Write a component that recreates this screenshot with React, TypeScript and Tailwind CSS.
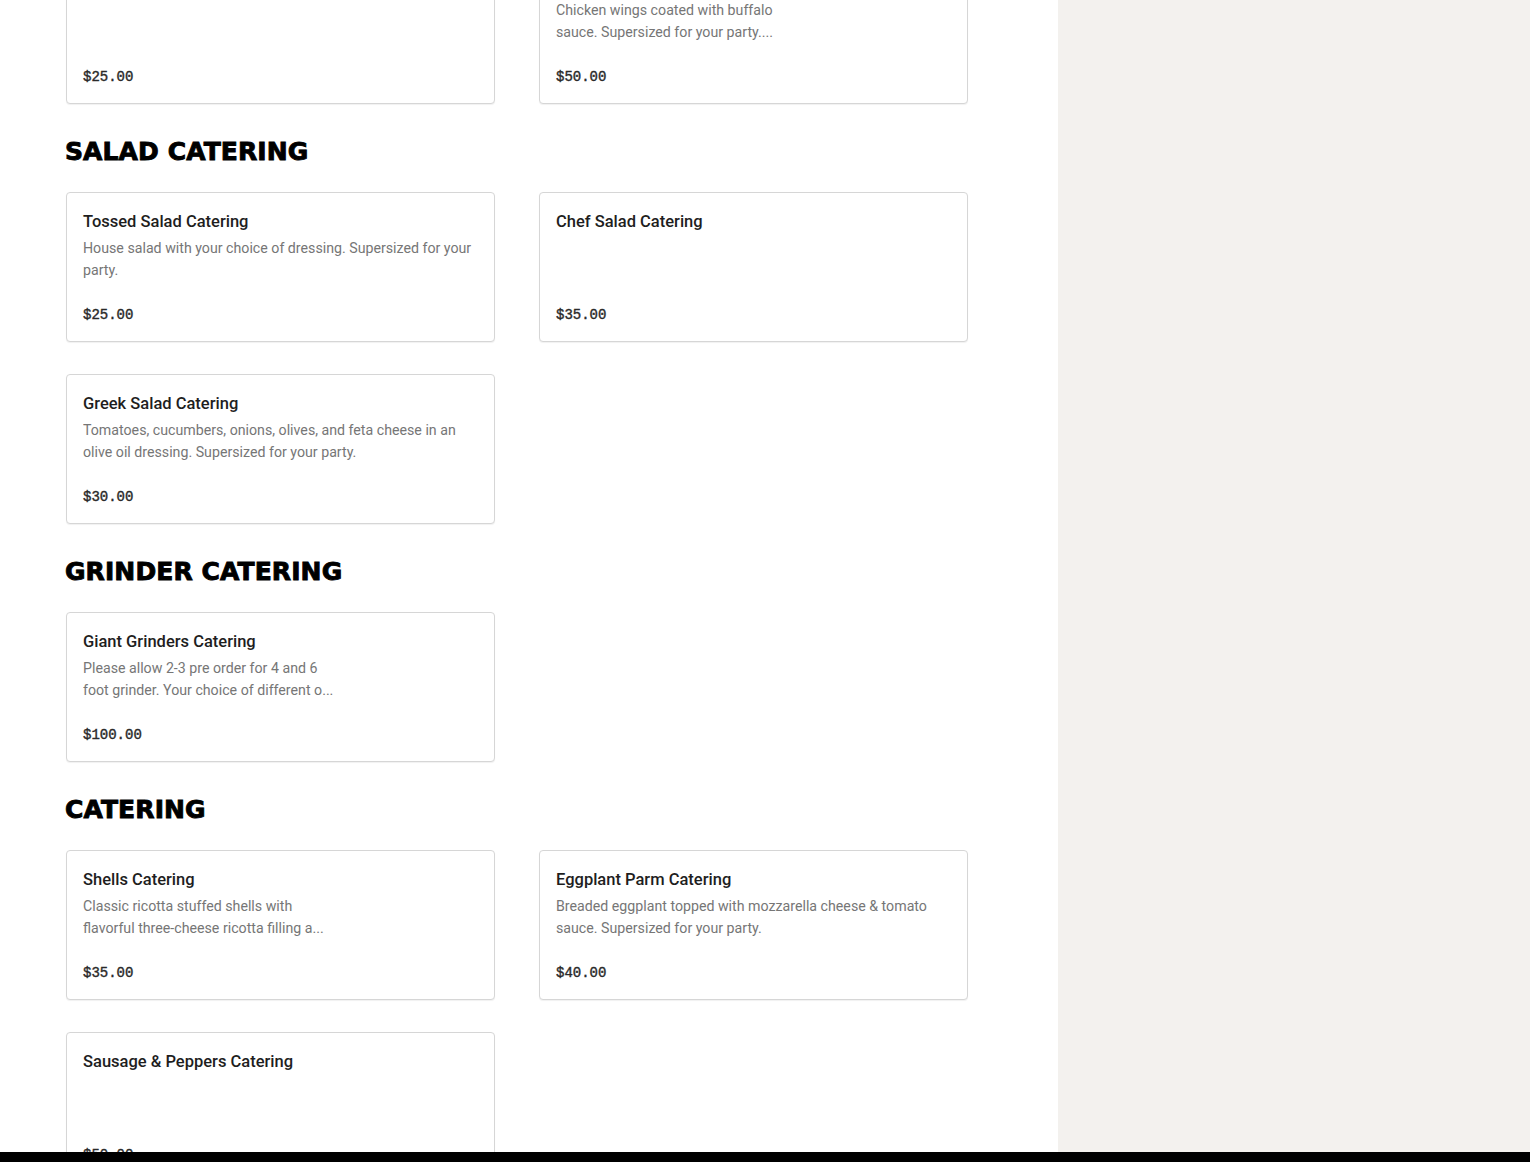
import React from "react";

type Item = { title: string; desc?: string; price: string; narrow?: boolean };
type Section = { heading?: string; items: Item[] };

const sections: Section[] = [
  {
    items: [
      { title: "Garlic Bread Catering", price: "$25.00" },
      {
        title: "Buffalo Wings Catering",
        desc: "Chicken wings coated with buffalo sauce. Supersized for your party....",
        price: "$50.00",
        narrow: true,
      },
    ],
  },
  {
    heading: "SALAD CATERING",
    items: [
      {
        title: "Tossed Salad Catering",
        desc: "House salad with your choice of dressing. Supersized for your party.",
        price: "$25.00",
      },
      { title: "Chef Salad Catering", price: "$35.00" },
      {
        title: "Greek Salad Catering",
        desc: "Tomatoes, cucumbers, onions, olives, and feta cheese in an olive oil dressing. Supersized for your party.",
        price: "$30.00",
      },
    ],
  },
  {
    heading: "GRINDER CATERING",
    items: [
      {
        title: "Giant Grinders Catering",
        desc: "Please allow 2-3 pre order for 4 and 6 foot grinder. Your choice of different o...",
        price: "$100.00",
        narrow: true,
      },
    ],
  },
  {
    heading: "CATERING",
    items: [
      {
        title: "Shells Catering",
        desc: "Classic ricotta stuffed shells with flavorful three-cheese ricotta filling a...",
        price: "$35.00",
        narrow: true,
      },
      {
        title: "Eggplant Parm Catering",
        desc: "Breaded eggplant topped with mozzarella cheese & tomato sauce. Supersized for your party.",
        price: "$40.00",
      },
      { title: "Sausage & Peppers Catering", price: "$50.00" },
    ],
  },
];

function Card({ item }: { item: Item }) {
  return (
    <div className="flex h-[150px] flex-col rounded-[4px] border border-[#d6d6d6] bg-white p-4 shadow-[0_1px_1px_rgba(0,0,0,0.06)]">
      <div className="pt-px text-[16.5px] leading-6 font-medium text-[#1e1e1e] [font-family:Roboto,'Liberation_Sans',sans-serif]">
        {item.title}
      </div>
      {item.desc && (
        <div
          className={
            "mt-[3px] line-clamp-2 text-[14.2px] leading-[22px] text-[#767676] [font-family:Roboto,'Liberation_Sans',sans-serif] " +
            (item.narrow ? "max-w-[258px]" : "")
          }
        >
          {item.desc}
        </div>
      )}
      <div className="mt-auto text-[14px] leading-5 font-normal text-[#2a2a2a] [font-family:'Liberation_Mono',monospace] [-webkit-text-stroke:0.4px_#2a2a2a]">
        {item.price}
      </div>
    </div>
  );
}

export default function App() {
  return (
    <div className="relative flex h-[1162px] w-full overflow-hidden bg-white">
      <div className="w-[1058px] shrink-0 pl-[66px]">
        <div className="-mt-[46px]">
          {sections.map((s, i) => (
            <div key={i}>
              {s.heading && (
                <h2 className="mt-8 mb-6 -ml-px h-8 text-[25px] leading-8 font-black tracking-[0.1px] text-black [font-family:'DejaVu_Sans',sans-serif] [-webkit-text-stroke:0.9px_black]">
                  {s.heading}
                </h2>
              )}
              <div className="grid w-[902px] grid-cols-2 gap-x-[44px] gap-y-8">
                {s.items.map((it, j) => (
                  <Card key={j} item={it} />
                ))}
              </div>
            </div>
          ))}
        </div>
      </div>
      <div className="flex-1 bg-[#f3f1ee]" />
      <div className="absolute bottom-0 left-0 h-[10px] w-full bg-black" />
    </div>
  );
}
